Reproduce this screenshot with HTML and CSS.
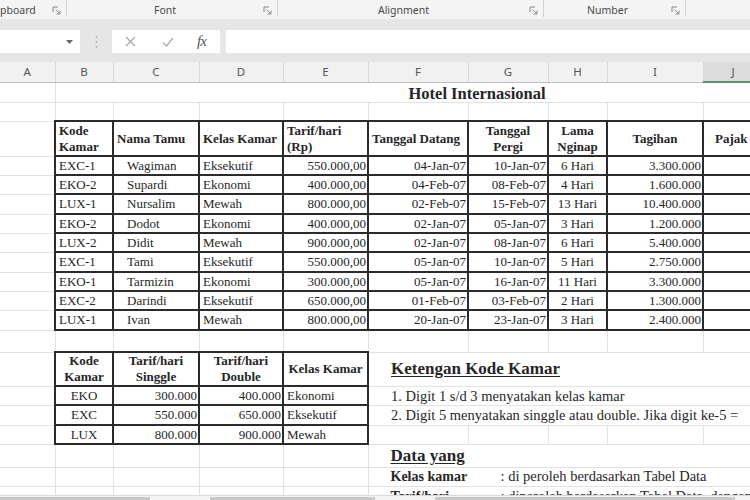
FILE: index.html
```html
<!DOCTYPE html>
<html>
<head>
<meta charset="utf-8">
<link rel="stylesheet" href="styles.css">
</head>
<body>
<div class="ribbon">
  <div class="grp g1"><span class="lbl left">pboard</span><svg class="launch" width="9" height="9" viewBox="0 0 9 9"><path d="M1 6V1h5" fill="none" stroke="#888" stroke-width="1"/><path d="M3.5 3.5l4 4M8 4.5V8H4.5" fill="none" stroke="#888" stroke-width="1"/></svg></div>
  <div class="grp g2"><span class="lbl">Font</span><svg class="launch" width="9" height="9" viewBox="0 0 9 9"><path d="M1 6V1h5" fill="none" stroke="#888" stroke-width="1"/><path d="M3.5 3.5l4 4M8 4.5V8H4.5" fill="none" stroke="#888" stroke-width="1"/></svg></div>
  <div class="grp g3"><span class="lbl">Alignment</span><svg class="launch" width="9" height="9" viewBox="0 0 9 9"><path d="M1 6V1h5" fill="none" stroke="#888" stroke-width="1"/><path d="M3.5 3.5l4 4M8 4.5V8H4.5" fill="none" stroke="#888" stroke-width="1"/></svg></div>
  <div class="grp g4"><span class="lbl">Number</span><svg class="launch" width="9" height="9" viewBox="0 0 9 9"><path d="M1 6V1h5" fill="none" stroke="#888" stroke-width="1"/><path d="M3.5 3.5l4 4M8 4.5V8H4.5" fill="none" stroke="#888" stroke-width="1"/></svg></div>
  <div class="grp g5"></div>
</div>
<div class="fbar">
  <div class="namebox"><svg width="7" height="4" viewBox="0 0 7 4"><path d="M0 0h7L3.5 4z" fill="#666"/></svg></div>
  <div class="grip"><svg width="3" height="14" viewBox="0 0 3 14"><circle cx="1.5" cy="2" r="1" fill="#b5b5b5"/><circle cx="1.5" cy="7" r="1" fill="#b5b5b5"/><circle cx="1.5" cy="12" r="1" fill="#b5b5b5"/></svg></div>
  <div class="fbtns">
    <svg class="ico-x" width="11" height="11" viewBox="0 0 11 11"><path d="M1 1l9 9M10 1l-9 9" stroke="#a8a8a8" stroke-width="1.2" fill="none"/></svg>
    <svg class="ico-ok" width="12" height="10" viewBox="0 0 12 10"><path d="M1 5.5l3.5 3.5L11 1" stroke="#a8a8a8" stroke-width="1.2" fill="none"/></svg>
    <span class="fx">fx</span>
  </div>
  <div class="finput"></div>
</div>
<div class="sheet">
<table class="grid">
  <colgroup>
    <col class="cA"><col class="cB"><col class="cC"><col class="cD"><col class="cE"><col class="cF"><col class="cG"><col class="cH"><col class="cI"><col class="cJ">
  </colgroup>
  <tr class="colhdr"><th>A</th><th>B</th><th>C</th><th>D</th><th>E</th><th>F</th><th>G</th><th>H</th><th>I</th><th class="sel">J</th></tr>
  <tr class="h20"><td></td><td colspan="9" class="title">Hotel Internasional</td></tr>
  <tr class="h19"><td></td><td></td><td></td><td></td><td></td><td></td><td></td><td></td><td></td><td></td></tr>
  <tr class="h35 hd">
    <td></td>
    <td class="b">Kode<br>Kamar</td>
    <td class="b">Nama Tamu</td>
    <td class="b">Kelas Kamar</td>
    <td class="b">Tarif/hari<br>(Rp)</td>
    <td class="b">Tanggal Datang</td>
    <td class="b c">Tanggal<br>Pergi</td>
    <td class="b c">Lama<br>Nginap</td>
    <td class="b c">Tagihan</td>
    <td class="b pj">Pajak</td>
  </tr>
  <tr class="h19"><td></td><td class="b">EXC-1</td><td class="b nm">Wagiman</td><td class="b">Eksekutif</td><td class="b r">550.000,00</td><td class="b r">04-Jan-07</td><td class="b r">10-Jan-07</td><td class="b c">6 Hari</td><td class="b r">3.300.000</td><td class="b"></td></tr>
  <tr class="h19"><td></td><td class="b">EKO-2</td><td class="b nm">Supardi</td><td class="b">Ekonomi</td><td class="b r">400.000,00</td><td class="b r">04-Feb-07</td><td class="b r">08-Feb-07</td><td class="b c">4 Hari</td><td class="b r">1.600.000</td><td class="b"></td></tr>
  <tr class="h20"><td></td><td class="b">LUX-1</td><td class="b nm">Nursalim</td><td class="b">Mewah</td><td class="b r">800.000,00</td><td class="b r">02-Feb-07</td><td class="b r">15-Feb-07</td><td class="b c">13 Hari</td><td class="b r">10.400.000</td><td class="b"></td></tr>
  <tr class="h19"><td></td><td class="b">EKO-2</td><td class="b nm">Dodot</td><td class="b">Ekonomi</td><td class="b r">400.000,00</td><td class="b r">02-Jan-07</td><td class="b r">05-Jan-07</td><td class="b c">3 Hari</td><td class="b r">1.200.000</td><td class="b"></td></tr>
  <tr class="h19"><td></td><td class="b">LUX-2</td><td class="b nm">Didit</td><td class="b">Mewah</td><td class="b r">900.000,00</td><td class="b r">02-Jan-07</td><td class="b r">08-Jan-07</td><td class="b c">6 Hari</td><td class="b r">5.400.000</td><td class="b"></td></tr>
  <tr class="h20"><td></td><td class="b">EXC-1</td><td class="b nm">Tami</td><td class="b">Eksekutif</td><td class="b r">550.000,00</td><td class="b r">05-Jan-07</td><td class="b r">10-Jan-07</td><td class="b c">5 Hari</td><td class="b r">2.750.000</td><td class="b"></td></tr>
  <tr class="h19"><td></td><td class="b">EKO-1</td><td class="b nm">Tarmizin</td><td class="b">Ekonomi</td><td class="b r">300.000,00</td><td class="b r">05-Jan-07</td><td class="b r">16-Jan-07</td><td class="b c">11 Hari</td><td class="b r">3.300.000</td><td class="b"></td></tr>
  <tr class="h19"><td></td><td class="b">EXC-2</td><td class="b nm">Darindi</td><td class="b">Eksekutif</td><td class="b r">650.000,00</td><td class="b r">01-Feb-07</td><td class="b r">03-Feb-07</td><td class="b c">2 Hari</td><td class="b r">1.300.000</td><td class="b"></td></tr>
  <tr class="h20"><td></td><td class="b">LUX-1</td><td class="b nm">Ivan</td><td class="b">Mewah</td><td class="b r">800.000,00</td><td class="b r">20-Jan-07</td><td class="b r">23-Jan-07</td><td class="b c">3 Hari</td><td class="b r">2.400.000</td><td class="b"></td></tr>
  <tr class="h22"><td></td><td></td><td></td><td></td><td></td><td></td><td></td><td></td><td></td><td></td></tr>
  <tr class="h33">
    <td></td>
    <td class="b c hd">Kode<br>Kamar</td>
    <td class="b c hd">Tarif/hari<br>Singgle</td>
    <td class="b c hd">Tarif/hari<br>Double</td>
    <td class="b c hd">Kelas Kamar</td>
    <td colspan="5" class="note head">Ketengan Kode Kamar</td>
  </tr>
  <tr class="h19"><td></td><td class="b c">EKO</td><td class="b r">300.000</td><td class="b r">400.000</td><td class="b">Ekonomi</td><td colspan="5" class="note">1. Digit 1 s/d 3 menyatakan kelas kamar</td></tr>
  <tr class="h20"><td></td><td class="b c">EXC</td><td class="b r">550.000</td><td class="b r">650.000</td><td class="b">Eksekutif</td><td colspan="5" class="note">2. Digit 5 menyatakan singgle atau double. Jika digit ke-5 =</td></tr>
  <tr class="h19"><td></td><td class="b c">LUX</td><td class="b r">800.000</td><td class="b r">900.000</td><td class="b">Mewah</td><td></td><td></td><td></td><td></td><td></td></tr>
  <tr class="h23"><td></td><td></td><td></td><td></td><td></td><td colspan="5" class="note head">Data yang</td></tr>
  <tr class="h19"><td></td><td></td><td></td><td></td><td></td><td colspan="5" class="note"><span class="key">Kelas kamar</span>: di peroleh berdasarkan Tabel Data</td></tr>
  <tr class="h20"><td></td><td></td><td></td><td></td><td></td><td colspan="5" class="note"><span class="key">Tarif/hari</span>: diperoleh berdasarkan Tabel Data, dengan</td></tr>
</table>
</div>
<div class="footer"><span class="bar b1"></span><span class="bar b2"></span><span class="bar b3"></span></div>
</body>
</html>
```

FILE: styles.css
```css
* { box-sizing: border-box; }
html, body { margin: 0; padding: 0; }
body {
  width: 750px;
  height: 500px;
  overflow: hidden;
  background: #ffffff;
  font-family: "Noto Sans", "Open Sans", sans-serif;
}

/* ribbon group labels */
.ribbon {
  display: flex;
  height: 19px;
  background: #f4f4f4;
  font-size: 10.5px;
  color: #4a4a4a;
}
.grp {
  display: flex;
  align-items: center;
  height: 17px;
  border-right: 1px solid #d2d2d2;
}
.lbl { flex: 1; text-align: center; line-height: 17px; padding-top: 4px; }
.lbl.left { text-align: left; }
.launch { margin-right: 5px; margin-top: 4px; }
.g1 { width: 67px; }
.g2 { width: 211px; }
.g3 { width: 266px; }
.g4 { width: 142px; }
.g5 { flex: 1; border-right: 0; }

/* formula bar */
.fbar {
  display: flex;
  height: 43px;
  padding: 11px 0 9px;
  background: #e6e6e6;
}
.namebox {
  width: 80px;
  background: #fff;
  display: flex;
  align-items: center;
  justify-content: flex-end;
  padding-right: 7px;
}
.grip {
  width: 32px;
  display: flex;
  align-items: center;
  justify-content: center;
}
.fbtns {
  width: 108px;
  background: #fff;
  display: flex;
  align-items: center;
}
.ico-x { margin-left: 13px; }
.ico-ok { margin-left: 26px; }
.fx {
  margin-left: 23px;
  font-family: "Liberation Serif", serif;
  font-style: italic;
  font-size: 15px;
  color: #555;
  letter-spacing: -1px;
}
.finput {
  flex: 1;
  margin-left: 6px;
  background: #fff;
}

/* sheet */
.sheet {
  height: 433px;
  overflow: hidden;
}
.grid {
  border-collapse: collapse;
  table-layout: fixed;
  width: 763px;
  font-family: "Liberation Serif", "Times New Roman", serif;
  font-size: 13px;
  color: #262626;
}
.cA { width: 55px; }
.cB { width: 58px; }
.cC { width: 86px; }
.cD { width: 84px; }
.cE { width: 85px; }
.cF { width: 100px; }
.cG { width: 80px; }
.cH { width: 59px; }
.cI { width: 96px; }
.cJ { width: 60px; }

.colhdr { height: 20px; }
.colhdr th {
  background: #f1f1f1;
  border: 0;
  border-right: 1px solid #d8d8d8;
  border-bottom: 1px solid #bfbfbf;
  font-family: "Noto Sans", "Open Sans", sans-serif;
  font-weight: normal;
  font-size: 11.5px;
  color: #555;
  padding: 0;
  line-height: 19px;
}
.colhdr th.sel {
  background: #dcdcdc;
  border-bottom: 2px solid #5e8f6f;
}

.grid td {
  border: 1px solid #e2e2e2;
  padding: 0 3px;
  white-space: nowrap;
  overflow: hidden;
  line-height: 16px;
  vertical-align: middle;
}
.grid tr td:first-child { border-left: 0; }
.grid td.b { border: 2px solid #2b2b2b; }

.h19 { height: 19px; }
.h20 { height: 20px; }
.h22 { height: 22px; }
.h23 { height: 23px; }
.h33 { height: 33px; }
.h35 { height: 35px; }

.hd td.b, td.hd { font-weight: bold; }
.grid td.r { text-align: right; padding-right: 1px; }
.c { text-align: center; }
.nm { padding-left: 13px !important; }
.pj { padding-left: 11px !important; }

.grid td.title {
  font-weight: bold;
  font-size: 16.5px;
  line-height: 17px;
  padding-left: 353px;
  vertical-align: bottom;
}

.note {
  padding-left: 22px !important;
  font-size: 14.5px;
  color: #262626;
}
.note.head {
  font-weight: bold;
  font-size: 17px;
  text-decoration: underline;
  text-underline-offset: 2px;
}
.key {
  display: inline-block;
  width: 110px;
  font-weight: bold;
  font-size: 14px;
}

/* bottom strip */
.footer {
  height: 5px;
  background: #f3f3f3;
  border-top: 1px solid #d9d9d9;
  display: flex;
  align-items: flex-end;
}
.bar { height: 3px; background: #c8c8c8; }
.b1 { width: 150px; }
.b2 { width: 165px; margin-left: 60px; }
.b3 { width: 300px; margin-left: 60px; }
```
